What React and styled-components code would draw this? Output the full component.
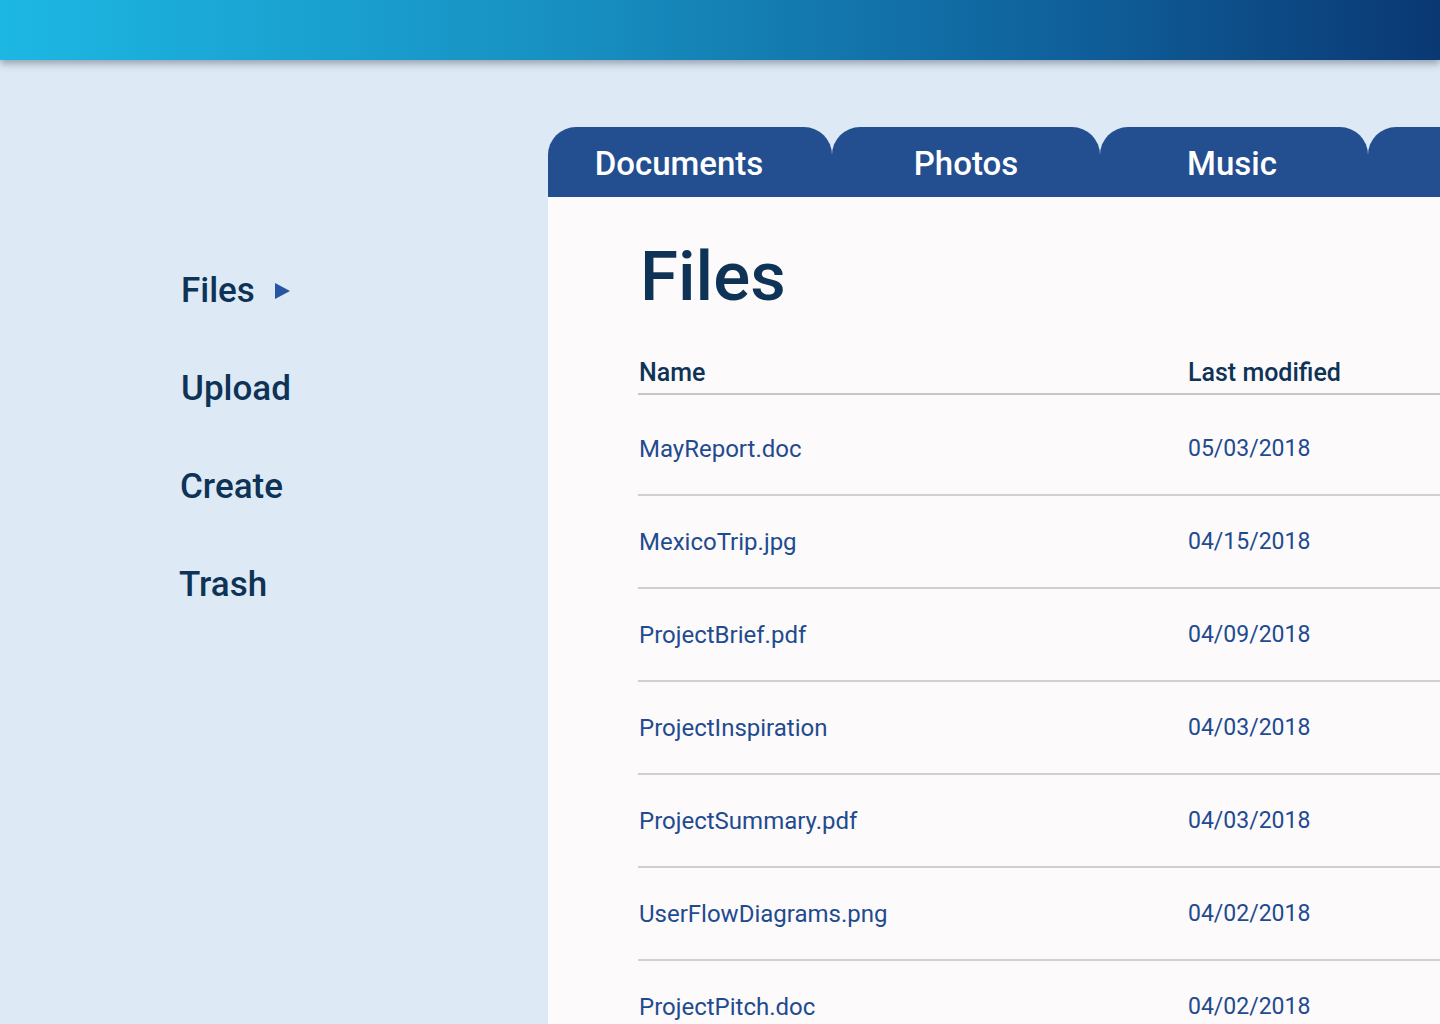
import React from "react";
import styled, { createGlobalStyle } from "styled-components";

const GlobalStyle = createGlobalStyle`
    html, body {
        margin: 0;
        padding: 0;
        background: #ddeaf6;
        font-family: Roboto, "Noto Sans", sans-serif;
        overflow: hidden;
    }
`;

const Page = styled.div`
    width: 1440px;
    height: 1024px;
    display: flex;
    flex-direction: column;
    overflow: hidden;
`;

const TopBar = styled.header`
    height: 60px;
    flex-shrink: 0;
    background: linear-gradient(90deg, #1db7e3 0%, #178fc0 40%, #0f5f9a 75%, #0a3873 100%);
    box-shadow: 0 4px 7px rgba(70, 80, 100, 0.45);
    position: relative;
    z-index: 2;
`;

const Body = styled.div`
    flex: 1;
    display: flex;
    min-height: 0;
`;

const Sidebar = styled.nav`
    width: 548px;
    flex-shrink: 0;
    padding: 209px 0 0 181px;
    box-sizing: border-box;
    display: flex;
    flex-direction: column;
    gap: 56px;
`;

const NavItem = styled.div`
    display: flex;
    align-items: center;
    gap: 20px;
    height: 42px;
    font-size: 35px;
    font-weight: 500;
    color: #0e3357;
    cursor: pointer;
    margin-left: ${p => p.$shift || 0}px;
`;

const Arrow = styled.span`
    width: 0;
    height: 0;
    border-top: 8px solid transparent;
    border-bottom: 8px solid transparent;
    border-left: 15px solid #2656a3;
    margin-top: 2px;
`;

const Main = styled.section`
    flex: 1;
    display: flex;
    flex-direction: column;
    padding-top: 67px;
    overflow: hidden;
`;

const TabRow = styled.div`
    display: flex;
    height: 70px;
    flex-shrink: 0;
`;

const Tab = styled.div`
    width: ${p => p.$width}px;
    flex-shrink: 0;
    background: #234e90;
    border-radius: 28px 28px 0 0;
    color: #ffffff;
    font-size: 33px;
    font-weight: 500;
    display: flex;
    align-items: center;
    justify-content: center;
    padding-right: ${p => p.$shift || 0}px;
    box-sizing: border-box;
    padding-top: 2px;
`;

const Panel = styled.div`
    flex: 1;
    background: #fdfafb;
    padding: 44px 0 0 90px;
`;

const Title = styled.h1`
    margin: 0 0 45px 2px;
    font-size: 69px;
    line-height: 72px;
    font-weight: 500;
    color: #0e3357;
`;

const HeadRow = styled.div`
    display: grid;
    grid-template-columns: 549px 1fr;
    height: 30px;
    line-height: 30px;
    padding-bottom: 5px;
    border-bottom: 2px solid #c6c6c6;
    font-size: 25px;
    font-weight: 500;
    color: #0e3357;
    padding-left: 1px;
`;

const Rows = styled.div`
    padding-top: 8px;
`;

const Row = styled.div`
    display: grid;
    grid-template-columns: 549px 1fr;
    align-items: center;
    height: 91px;
    border-bottom: 2px solid #d0d0d0;
    font-size: 24px;
    color: #1f4b8f;
    padding-left: 1px;
`;

const FileName = styled.span`
    cursor: pointer;
`;

const DateText = styled.span`
    font-size: 23px;
`;

const tabs = [
    { label: "Documents", width: 284, shift: 22 },
    { label: "Photos", width: 268, shift: 0 },
    { label: "Music", width: 268, shift: 4 },
    { label: "", width: 268, shift: 0 },
];

const files = [
    ["MayReport.doc", "05/03/2018"],
    ["MexicoTrip.jpg", "04/15/2018"],
    ["ProjectBrief.pdf", "04/09/2018"],
    ["ProjectInspiration", "04/03/2018"],
    ["ProjectSummary.pdf", "04/03/2018"],
    ["UserFlowDiagrams.png", "04/02/2018"],
    ["ProjectPitch.doc", "04/02/2018"],
];

const App = () => {
    return (
        <Page>
            <GlobalStyle />
            <TopBar />
            <Body>
                <Sidebar>
                    <NavItem>Files <Arrow /></NavItem>
                    <NavItem>Upload</NavItem>
                    <NavItem $shift={-1}>Create</NavItem>
                    <NavItem $shift={-2}>Trash</NavItem>
                </Sidebar>
                <Main>
                    <TabRow>
                        {tabs.map((t, i) => (
                            <Tab key={i} $width={t.width} $shift={t.shift}>
                                {t.label}
                            </Tab>
                        ))}
                    </TabRow>
                    <Panel>
                        <Title>Files</Title>
                        <HeadRow>
                            <span>Name</span>
                            <span>Last modified</span>
                        </HeadRow>
                        <Rows>
                            {files.map(([name, date]) => (
                                <Row key={name}>
                                    <FileName>{name}</FileName>
                                    <DateText>{date}</DateText>
                                </Row>
                            ))}
                        </Rows>
                    </Panel>
                </Main>
            </Body>
        </Page>
    );
};

export default App;
